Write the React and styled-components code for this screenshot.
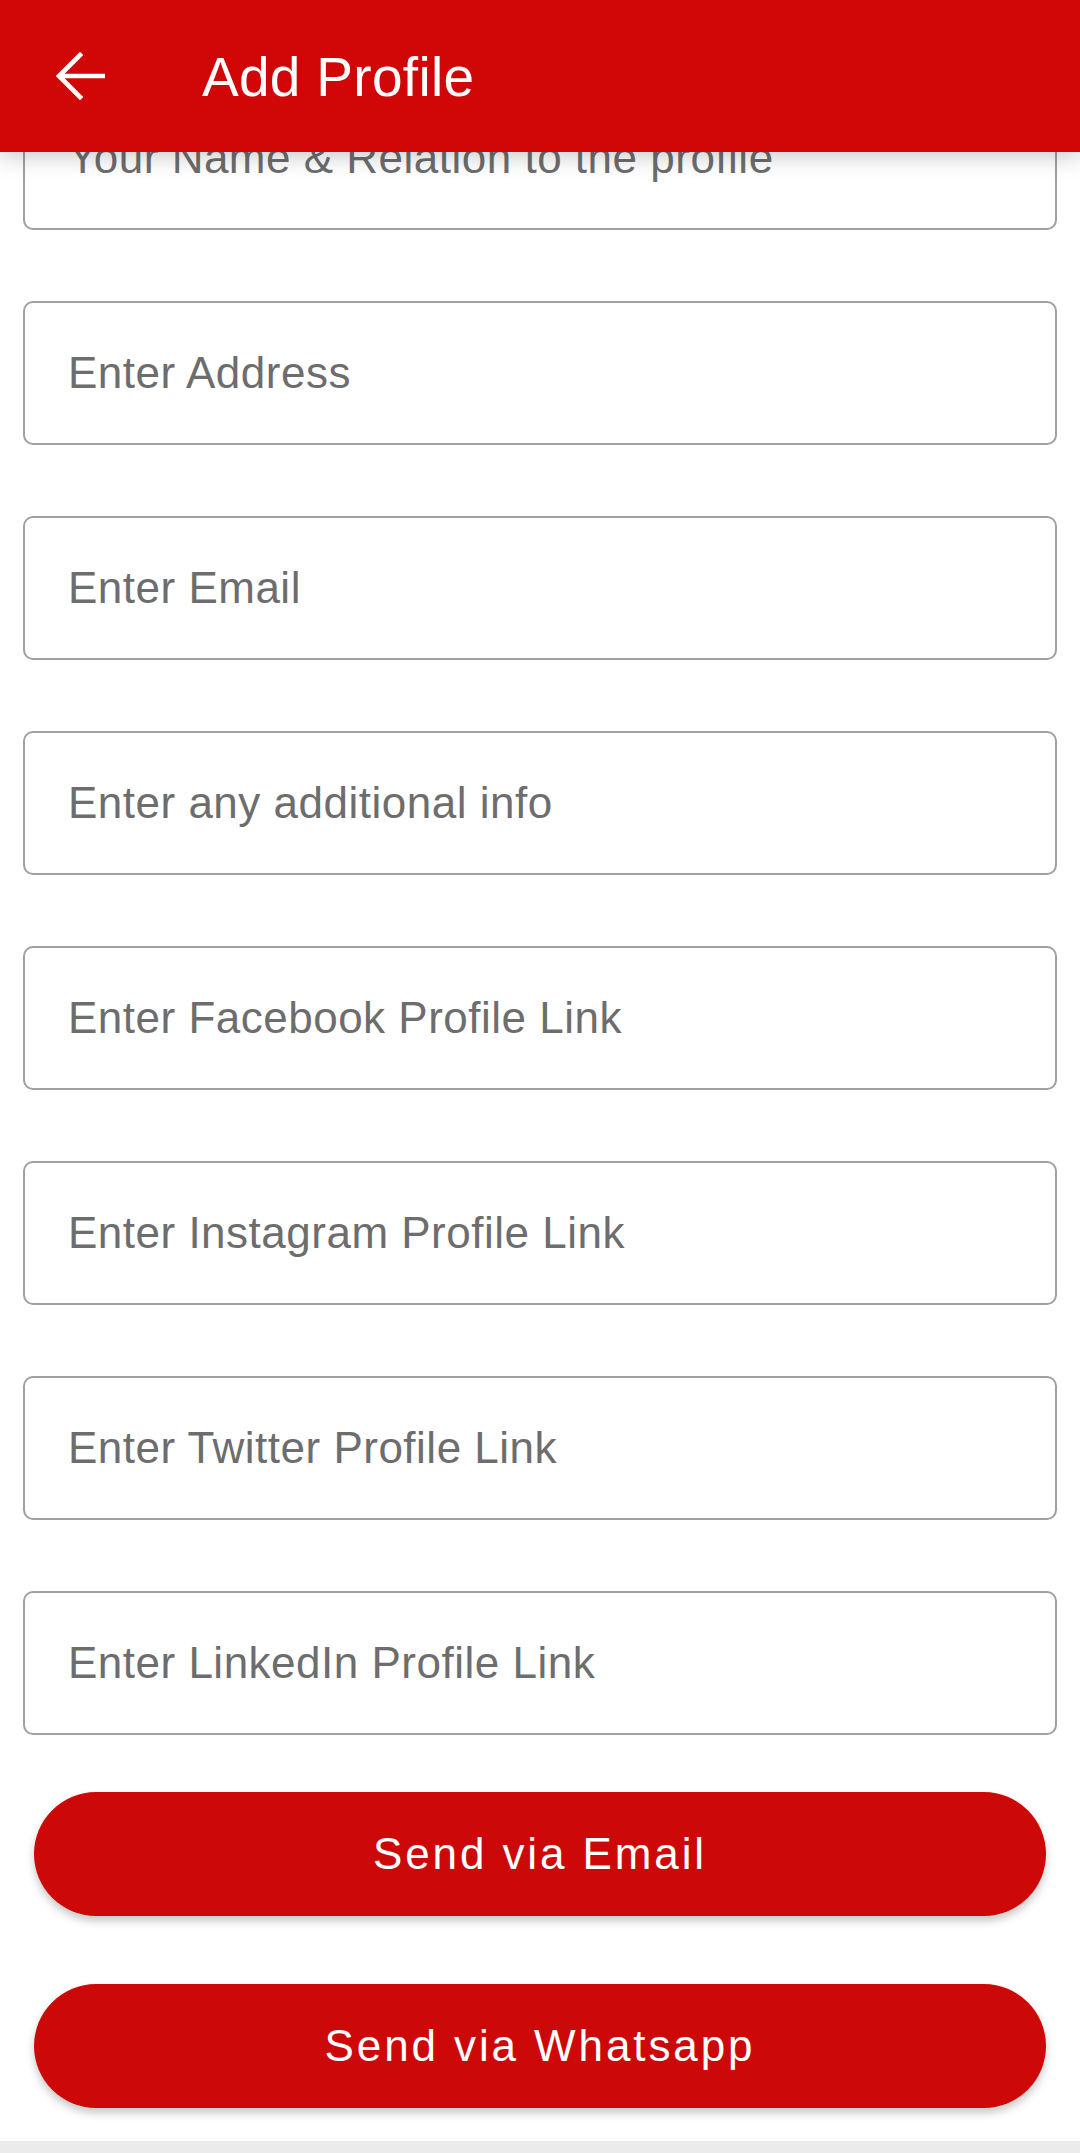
import React from "react"
import styled, { createGlobalStyle } from "styled-components"

const GlobalStyle = createGlobalStyle`
  html, body {
    margin: 0;
    padding: 0;
    background: #ffffff;
    font-family: "Liberation Sans", Arial, sans-serif;
  }
  * {
    box-sizing: border-box;
  }
`

const Page = styled.div`
  position: relative;
  width: 1080px;
  height: 2153px;
  overflow: hidden;
  display: flex;
  flex-direction: column;
  background: #ffffff;
`

const AppBar = styled.header`
  position: absolute;
  top: 0;
  left: 0;
  right: 0;
  z-index: 2;
  height: 152px;
  display: flex;
  align-items: center;
  padding-left: 55px;
  background: #d10707;
  box-shadow: 0 4px 22px rgba(0, 0, 0, 0.22);
`

const BackButton = styled.button`
  display: flex;
  align-items: center;
  justify-content: center;
  width: 50px;
  height: 50px;
  padding: 0;
  margin-right: 97px;
  border: none;
  background: transparent;
  cursor: pointer;
`

const Title = styled.h1`
  margin: 0;
  margin-top: 2px;
  color: #ffffff;
  font-size: 55px;
  font-weight: 400;
  letter-spacing: 0.3px;
`

const Form = styled.form`
  flex: 1;
  display: flex;
  flex-direction: column;
  padding: 86px 23px 0 23px;
`

const Fields = styled.div`
  display: flex;
  flex-direction: column;
  gap: 71px;
`

const Field = styled.input`
  width: 100%;
  height: 144px;
  padding: 0 0 0 43px;
  border: 2px solid #a0a0a0;
  border-radius: 10px;
  background: #ffffff;
  font-family: "Liberation Sans", Arial, sans-serif;
  font-size: 44px;
  letter-spacing: 0.5px;
  color: #333333;
  outline: none;

  &::placeholder {
    color: #6d6d6d;
    opacity: 1;
  }
`

const Actions = styled.div`
  display: flex;
  flex-direction: column;
  gap: 68px;
  padding: 57px 11px 0 11px;
`

const SendButton = styled.button`
  height: 124px;
  border: none;
  border-radius: 62px;
  background: #cd0808;
  color: #ffffff;
  font-family: "Liberation Sans", Arial, sans-serif;
  font-size: 44px;
  letter-spacing: 2.9px;
  box-shadow: 0 5px 8px rgba(0, 0, 0, 0.22);
  cursor: pointer;
`

const NavStrip = styled.div`
  margin-top: auto;
  height: 12px;
  background: #ebebeb;
`

const fields = [
  "Your Name & Relation to the profile",
  "Enter Address",
  "Enter Email",
  "Enter any additional info",
  "Enter Facebook Profile Link",
  "Enter Instagram Profile Link",
  "Enter Twitter Profile Link",
  "Enter LinkedIn Profile Link",
]

function BackArrow() {
  return (
    <svg width="50" height="50" viewBox="0 0 50 50" fill="none">
      <path
        d="M48 25H5M25 4L4 25l21 21"
        stroke="#ffffff"
        strokeWidth="4.6"
        strokeLinecap="square"
      />
    </svg>
  )
}

export default function App() {
  return (
    <>
      <GlobalStyle />
      <Page>
        <AppBar>
          <BackButton type="button" aria-label="Back">
            <BackArrow />
          </BackButton>
          <Title>Add Profile</Title>
        </AppBar>
        <Form onSubmit={(e) => e.preventDefault()}>
          <Fields>
            {fields.map((label) => (
              <Field key={label} type="text" placeholder={label} />
            ))}
          </Fields>
          <Actions>
            <SendButton type="button">Send via Email</SendButton>
            <SendButton type="button">Send via Whatsapp</SendButton>
          </Actions>
        </Form>
        <NavStrip />
      </Page>
    </>
  )
}
